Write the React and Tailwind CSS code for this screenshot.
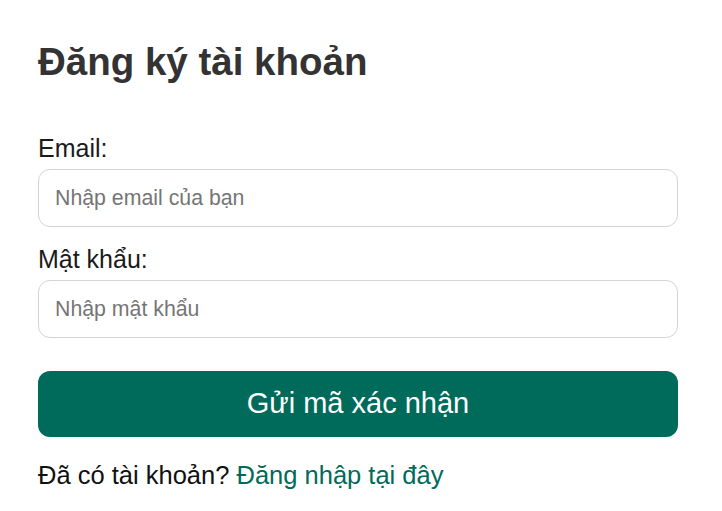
import React, { useState } from "react";

const App = () => {
  const [email, setEmail] = useState("");
  const [password, setPassword] = useState("");

  return (
    <div className="min-h-screen bg-white font-['Liberation_Sans',Arial,sans-serif]">
      <div className="w-[640px] ml-[38px] pt-[40px]">
        <h1 className="text-[38.5px] leading-[44px] font-bold text-[#333333]">
          Đăng ký tài khoản
        </h1>

        <form className="mt-[50px] flex flex-col" onSubmit={(e) => e.preventDefault()}>
          <label className="text-[25px] leading-[28px] text-[#1a1a1a]">Email:</label>
          <input
            type="email"
            value={email}
            onChange={(e) => setEmail(e.target.value)}
            placeholder="Nhập email của bạn"
            className="mt-[7px] h-[58px] w-full rounded-[12px] border border-[#d4d4d4] px-[16px] text-[21.3px] text-[#222] placeholder:text-[#757575] outline-none"
          />

          <label className="mt-[18px] text-[25px] leading-[28px] text-[#1a1a1a]">Mật khẩu:</label>
          <input
            type="password"
            value={password}
            onChange={(e) => setPassword(e.target.value)}
            placeholder="Nhập mật khẩu"
            className="mt-[7px] h-[58px] w-full rounded-[12px] border border-[#d4d4d4] px-[16px] text-[21.3px] text-[#222] placeholder:text-[#757575] outline-none"
          />

          <button
            type="submit"
            className="mt-[33px] h-[66px] w-full rounded-[12px] bg-[#006b5a] text-[29px] text-white"
          >
            Gửi mã xác nhận
          </button>
        </form>

        <p className="mt-[24px] text-[25.5px] leading-[28px] text-[#111]">
          Đã có tài khoản?{" "}
          <a href="#" className="text-[#006b5a]">
            Đăng nhập tại đây
          </a>
        </p>
      </div>
    </div>
  );
};

export default App;
